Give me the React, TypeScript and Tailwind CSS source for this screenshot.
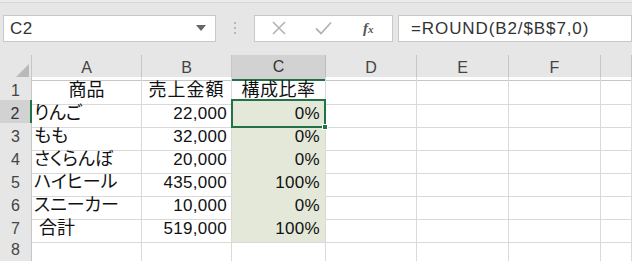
import React from "react";

const cols = ["A", "B", "C", "D", "E", "F", ""];

type Row = { a: string; b: string; c: string; pad?: boolean };

const rows: Row[] = [
  { a: "商品", b: "売上金額", c: "構成比率" },
  { a: "りんご", b: "22,000", c: "0%" },
  { a: "もも", b: "32,000", c: "0%" },
  { a: "さくらんぼ", b: "20,000", c: "0%" },
  { a: "ハイヒール", b: "435,000", c: "100%" },
  { a: "スニーカー", b: "10,000", c: "0%" },
  { a: "合計", b: "519,000", c: "100%", pad: true },
  { a: "", b: "", c: "" },
];

const gridCols = "grid grid-cols-[32px_110px_90px_94px_91px_92px_92px_1fr]";

const App = () => {
  return (
    <div
      className="w-[632px] h-[261px] overflow-hidden bg-[#e6e6e6] text-[#222] flex flex-col"
      style={{ fontFamily: '"Liberation Sans", "Noto Sans CJK JP", sans-serif' }}
    >
      {/* ribbon edge */}
      <div className="h-[4px] border-b border-[#d6d6d6] bg-[#ebebeb]" />

      {/* Formula bar */}
      <div className="flex items-center h-[28px] mt-[12px] pl-[3px]">
        <div className="w-[213px] h-full bg-white border border-[#c8c8c8] flex items-center justify-between pl-[6px] pr-[9px]">
          <span className="text-[17px] text-[#333] tracking-[0.5px]">C2</span>
          <svg width="10" height="6" viewBox="0 0 10 6">
            <path d="M0 0h10L5 6z" fill="#666" />
          </svg>
        </div>
        <div className="w-[38px] flex flex-col items-center gap-[3px]">
          <span className="w-[2px] h-[2px] bg-[#a8a8a8] rounded-full" />
          <span className="w-[2px] h-[2px] bg-[#a8a8a8] rounded-full" />
          <span className="w-[2px] h-[2px] bg-[#a8a8a8] rounded-full" />
        </div>
        <div className="w-[139px] h-full bg-white border border-[#c8c8c8] flex items-center pl-[17px] gap-[29px]">
          <svg width="14" height="14" viewBox="0 0 14 14">
            <path d="M1 1L13 13M13 1L1 13" stroke="#b3b3b3" strokeWidth="1.6" />
          </svg>
          <svg width="17" height="14" viewBox="0 0 17 14">
            <path d="M1 7.5L6 12.5L16 1.5" stroke="#b3b3b3" strokeWidth="1.8" fill="none" />
          </svg>
          <span
            className="text-[15px] italic font-bold text-[#555] ml-[2px]"
            style={{ fontFamily: '"Liberation Serif", serif' }}
          >
            f<span className="text-[11px]">x</span>
          </span>
        </div>
        <div className="flex-1 h-full ml-[5px] bg-white border border-[#c8c8c8] flex items-center pl-[12px]">
          <span className="text-[17px] text-[#333] tracking-[0.9px]">=ROUND(B2/$B$7,0)</span>
        </div>
      </div>

      {/* Sheet */}
      <div className="mt-[13px] flex-1 flex flex-col bg-white">
        {/* Column headers */}
        <div className={`${gridCols} h-[22px] bg-[#e6e6e6]`}>
          <div className="border-r border-b border-[#c6c6c6] flex items-end justify-end pr-[2px] pb-[3px]">
            <svg width="13" height="13" viewBox="0 0 13 13">
              <path d="M13 0V13H0z" fill="#b9b9b9" />
            </svg>
          </div>
          {cols.map((c, i) =>
            c === "C" ? (
              <div
                key={i}
                className="bg-[#d2d2d2] border-r border-[#bdbdbd] border-b-2 border-b-[#217346] flex items-center justify-center text-[16px] text-[#333]"
              >
                {c}
              </div>
            ) : (
              <div
                key={i}
                className="border-r border-b border-[#c6c6c6] flex items-center justify-center text-[16px] text-[#444]"
              >
                {c}
              </div>
            )
          )}
        </div>

        {/* Rows */}
        {rows.map((r, i) => {
          const n = i + 1;
          const selected = n === 2;
          const filled = n >= 2 && n <= 7;
          return (
            <div key={n} className={`${gridCols} h-[23px]`}>
              <div
                className={
                  selected
                    ? "bg-[#d2d2d2] border-b border-[#c6c6c6] border-r-2 border-r-[#217346] flex items-center justify-center text-[16px] text-[#333]"
                    : "bg-[#e6e6e6] border-r border-b border-[#c6c6c6] flex items-center justify-center text-[16px] text-[#444]"
                }
              >
                {n}
              </div>
              <div
                className={`border-r border-b border-[#d9d9d9] flex items-center text-[18px] text-[#111] whitespace-nowrap overflow-visible ${
                  n === 1 ? "justify-center" : "pl-[2px]"
                }`}
                style={{ fontFeatureSettings: '"palt"' }}
              >
                {r.pad ? "\u00a0" + r.a : r.a}
              </div>
              <div
                className={`border-r border-b border-[#d9d9d9] flex items-center text-[#111] whitespace-nowrap ${
                  n === 1 ? "justify-center text-[18px] tracking-[1px]" : "justify-end pr-[4px] text-[17px] tracking-[0.3px]"
                }`}
              >
                {r.b}
              </div>
              <div
                className={`relative border-r border-b border-[#d9d9d9] flex items-center text-[#111] whitespace-nowrap ${
                  n === 1 ? "justify-center text-[18px] tracking-[0.5px]" : "justify-end pr-[5px] text-[17px] tracking-[0.3px]"
                } ${filled ? "bg-[#e3e8d8]" : ""}`}
              >
                {r.c}
                {selected && (
                  <div className="absolute z-10 -left-px -top-px -right-px -bottom-px border-2 border-[#217346]">
                    <div className="absolute -right-[4px] -bottom-[4px] w-[6px] h-[6px] bg-[#217346] border border-white" />
                  </div>
                )}
              </div>
              {[0, 1, 2, 3].map((k) => (
                <div key={k} className="border-r border-b border-[#d9d9d9]" />
              ))}
            </div>
          );
        })}
      </div>
    </div>
  );
};

export default App;
